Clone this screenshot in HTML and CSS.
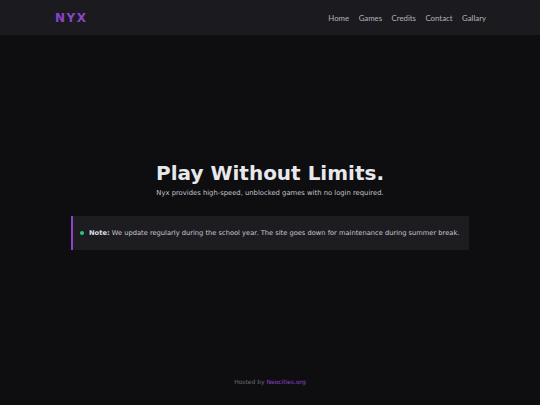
FILE: index.html
```html
<!DOCTYPE html>
<html lang="en">
<head>
  <meta charset="UTF-8">
  <meta name="viewport" content="width=device-width, initial-scale=1.0">
  <title>Nyx</title>
  <link rel="stylesheet" href="styles.css">
</head>
<body>
  <header class="topbar">
    <div class="logo">NYX</div>
    <nav class="nav">
      <a href="#">Home</a>
      <a href="#">Games</a>
      <a href="#">Credits</a>
      <a href="#">Contact</a>
      <a href="#">Gallary</a>
    </nav>
  </header>

  <main class="hero">
    <h1>Play Without Limits.</h1>
    <p class="tagline">Nyx provides high-speed, unblocked games with no login required.</p>

    <div class="note">
      <span class="dot"></span>
      <p><strong>Note:</strong> We update regularly during the school year. The site goes down for maintenance during summer break.</p>
    </div>
  </main>

  <footer class="footer">
    Hosted by <a href="#">Neocities.org</a>
  </footer>
</body>
</html>
```

FILE: styles.css
```css
body {
  font-family: "DejaVu Sans", Verdana, sans-serif;
  margin: 0;
  padding: 0;
  background-color: #0e0e11;
  color: #e6e6ea;
  min-height: 100vh;
  display: flex;
  flex-direction: column;
}
a {
  text-decoration: none;
}
.topbar {
  height: 35px;
  background-color: #1a1a1f;
  display: flex;
  align-items: center;
  justify-content: space-between;
  padding: 0 54px 0 55px;
}
.logo {
  font-weight: bold;
  font-size: 12px;
  letter-spacing: 1.5px;
  color: #8e44c9;
}
.nav {
  display: flex;
  gap: 9.5px;
}
.nav a {
  font-family: Lato, "Open Sans", sans-serif;
  color: #b4b4ba;
  font-size: 7.8px;
}
.hero {
  flex: 1;
  display: flex;
  flex-direction: column;
  align-items: center;
  justify-content: center;
  padding-bottom: 3px;
}
h1 {
  margin: 0;
  font-size: 20px;
  color: #e8e8ec;
}
.tagline {
  margin: 4px 0 0;
  font-size: 6.8px;
  color: #c4c4ca;
}
.note {
  margin-top: 19px;
  width: 389px;
  padding: 0 0 0 7px;
  height: 34px;
  display: flex;
  align-items: center;
  gap: 5px;
  background-color: #1c1c21;
  border-left: 2px solid #8e44c9;
}
.note p {
  margin: 0;
  font-size: 6.7px;
  color: #c8c8ce;
}
.note strong {
  color: #dcdce0;
}
.dot {
  width: 4px;
  height: 4px;
  border-radius: 50%;
  background-color: #2ecc71;
}
.footer {
  text-align: center;
  font-size: 6px;
  color: #6c6c74;
  padding: 0 0 20px;
}
.footer a {
  color: #8e44c9;
}
```
